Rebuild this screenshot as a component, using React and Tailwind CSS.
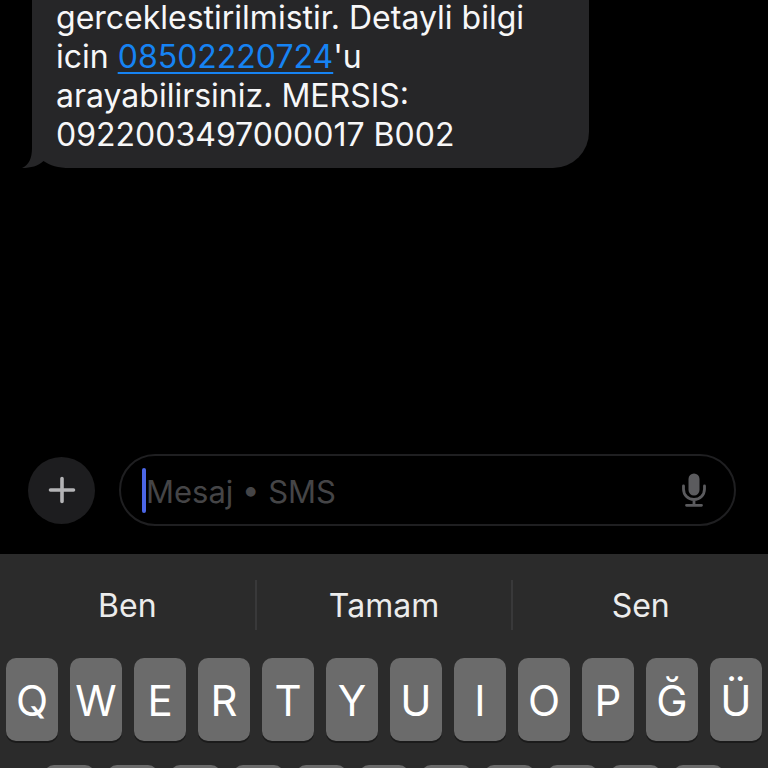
import { useState } from "react";

const SUGGESTIONS = ["Ben", "Tamam", "Sen"];
const TOP_ROW = ["Q", "W", "E", "R", "T", "Y", "U", "I", "O", "P", "Ğ", "Ü"];
const HOME_ROW = ["A", "S", "D", "F", "G", "H", "J", "K", "L", "Ş", "İ"];

// Little curl at the lower left corner of a received bubble
function BubbleTail() {
    return (
        <svg
            className="absolute bottom-0 -left-3 h-5 w-[50px]"
            viewBox="0 0 50 20"
            aria-hidden="true"
        >
            <path d="M12 0C12 10 9 17 2 20H13V0Z" fill="#262628" />
            <path d="M2 20C11 20 18 18 23.500 13C30 17.500 38 20 50 20Z" fill="#000" />
        </svg>
    );
}

function MessageBubble() {
    return (
        <div className="relative ml-8 max-w-[557px] rounded-br-[36px] bg-[#262628] pr-8 pb-3.5 pl-6">
            <p className="-mt-0.5 text-[32px] leading-[39px] text-[#f7f7f8]">
                gerceklestirilmistir. Detayli bilgi icin{" "}
                <a
                    href="tel:08502220724"
                    className="text-[#1683f3] underline decoration-2 underline-offset-4"
                >
                    08502220724
                </a>
                'u arayabilirsiniz. MERSIS: 0922003497000017 B002
            </p>
            <BubbleTail />
        </div>
    );
}

function MicIcon() {
    return (
        <svg className="h-[34px] w-6" viewBox="0 0 24 34" fill="none" aria-hidden="true">
            <rect x="6.500" y="0.500" width="11" height="22" rx="5.500" fill="#5b5b5e" />
            <path
                d="M1.500 13V16C1.500 22 6 26.500 12 26.500S22.500 22 22.500 16V13M12 26.500V32M4.500 32.300H19.500"
                stroke="#5b5b5e"
                strokeWidth="2.800"
                strokeLinecap="round"
            />
        </svg>
    );
}

function Composer() {
    const [message, setMessage] = useState("");

    return (
        <form
            className="flex items-center gap-6 pr-8 pb-7 pl-7"
            onSubmit={(e) => e.preventDefault()}
        >
            <button
                type="button"
                aria-label="Ekle"
                className="flex size-[67px] shrink-0 items-center justify-center rounded-full bg-[#1d1d1f]"
            >
                <svg className="size-7" viewBox="0 0 28 28" aria-hidden="true">
                    <path
                        d="M14 2.500V25.500M2.500 14H25.500"
                        stroke="#b4b4b6"
                        strokeWidth="3.600"
                        strokeLinecap="round"
                    />
                </svg>
            </button>
            <div className="flex h-[72px] min-w-0 flex-1 items-center rounded-full border-2 border-[#1f1f21] pr-7 pl-[21px]">
                <span className="h-[45px] w-1 shrink-0 rounded-full bg-[#4b66e6]" />
                <input
                    type="text"
                    aria-label="Mesaj"
                    placeholder="Mesaj • SMS"
                    value={message}
                    onChange={(e) => setMessage(e.target.value)}
                    className="min-w-0 flex-1 bg-transparent pt-1 text-[31px] leading-10 text-white caret-transparent outline-none placeholder:text-[#454547]"
                />
                <button type="button" aria-label="Dikte">
                    <MicIcon />
                </button>
            </div>
        </form>
    );
}

function Keyboard() {
    return (
        <div className="bg-[#2b2b2b] pt-[26px]">
            <div className="flex divide-x-2 divide-[#39393a]">
                {SUGGESTIONS.map((word) => (
                    <button
                        key={word}
                        type="button"
                        className="h-[50px] flex-1 pt-0.5 text-[32px] leading-10 text-[#ececec]"
                    >
                        {word}
                    </button>
                ))}
            </div>
            <div className="mt-7 flex gap-3 px-1.5">
                {TOP_ROW.map((letter) => (
                    <button
                        key={letter}
                        type="button"
                        className="h-[83px] min-w-0 flex-1 rounded-[10px] bg-[#6b6b6b] pt-0.5 text-[42px] leading-none text-white shadow-[0_2px_0_#1b1b1b]"
                    >
                        {letter}
                    </button>
                ))}
            </div>
            {/* only the top edge of the home row is in view */}
            <div className="mt-6 flex h-[3px] gap-3 overflow-hidden px-11">
                {HOME_ROW.map((letter) => (
                    <button
                        key={letter}
                        type="button"
                        aria-label={letter}
                        className="h-[83px] min-w-0 flex-1 rounded-[10px] bg-[#6b6b6b]"
                    />
                ))}
            </div>
        </div>
    );
}

export default function App() {
    return (
        <div className="flex min-h-screen flex-col bg-black font-['Inter',sans-serif]">
            <main className="flex-1">
                <MessageBubble />
            </main>
            <Composer />
            <Keyboard />
        </div>
    );
}
